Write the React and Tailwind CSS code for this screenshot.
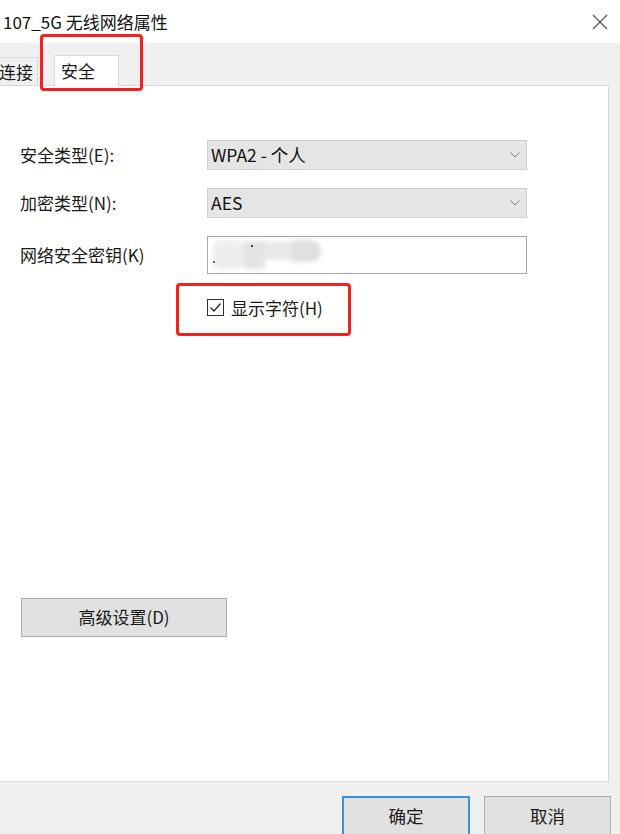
import React from "react";

const FONT = { fontFamily: '"Noto Sans CJK SC", "Noto Sans", sans-serif' };

function Chevron() {
  return (
    <svg width="12" height="8" viewBox="0 0 12 8" className="mr-[5px]">
      <path d="M1.5 1.5 L6 6 L10.5 1.5" fill="none" stroke="#7a7a7a" strokeWidth="1" />
    </svg>
  );
}

function Select({ value }) {
  return (
    <div className="w-[320px] h-[30px] bg-[#e5e5e5] border border-[#cfcfcf] flex items-center justify-between pl-[3px]">
      <span className="text-[17.5px] text-[#111]">{value}</span>
      <Chevron />
    </div>
  );
}

function Row({ label, children, className = "" }) {
  return (
    <div className={`flex items-center ${className}`}>
      <div className="w-[207px] pl-[20px] text-[17px] text-[#1a1a1a]">{label}</div>
      {children}
    </div>
  );
}

export default function App() {
  return (
    <div style={FONT} className="relative w-[620px] h-[834px] overflow-hidden bg-[#f0f0f0] text-[#1a1a1a]">
      {/* title bar */}
      <div className="h-[43px] bg-white flex items-center justify-between pl-[3px] pr-[12px]">
        <span className="text-[17px] text-[#111]">107_5G 无线网络属性</span>
        <svg width="16" height="16" viewBox="0 0 16 16">
          <path d="M1 1 L15 15 M15 1 L1 15" stroke="#555" strokeWidth="1.3" />
        </svg>
      </div>

      {/* tabs */}
      <div className="h-[42px] flex items-end">
        <div className="h-[28px] w-[40px] border-t border-r border-[#d9d9d9] bg-[#f0f0f0] flex items-center text-[17px] -ml-[2px] pl-[1px]">
          连接
        </div>
        <div className="h-[31px] w-[65px] ml-[16px] bg-white border-t border-l border-r border-[#d9d9d9] flex items-center pl-[6px] text-[17px] relative top-[1px]">
          安全
        </div>
      </div>

      {/* panel */}
      <div className="h-[697px] w-[609px] bg-white border border-l-0 border-[#d9d9d9] pt-[54px]">
        <Row label="安全类型(E):">
          <Select value="WPA2 - 个人" />
        </Row>
        <Row label="加密类型(N):" className="mt-[18px]">
          <Select value="AES" />
        </Row>
        <Row label="网络安全密钥(K)" className="mt-[18px]">
          <div className="w-[320px] h-[38px] bg-white border border-[#a9a9a9] relative overflow-hidden">
            <div className="absolute left-[5px] top-[3px] w-[108px] h-[30px] flex blur-[2px]">
              <div className="w-[30px] h-full bg-[#eeeeee] rounded-[8px]" />
              <div className="w-[22px] h-[28px] mt-[1px] bg-[#e4e4e4]" />
              <div className="w-[26px] h-[18px] mt-[2px] bg-[#e8e8e8]" />
              <div className="w-[30px] h-[22px] bg-[#e0e0e0] rounded-r-[10px]" />
            </div>
            <div className="absolute left-[43px] top-[8px] w-[2px] h-[2px] bg-[#444]" />
            <div className="absolute left-[5px] top-[24px] w-[2px] h-[2px] bg-[#666]" />
          </div>
        </Row>
        <div className="mt-[21px] pl-[207px] flex items-center gap-[7px]">
          <div className="w-[17px] h-[17px] border border-[#333] bg-white flex items-center justify-center">
            <svg width="13" height="13" viewBox="0 0 13 13">
              <path d="M1.5 6.5 L5 10 L11.5 2.5" fill="none" stroke="#222" strokeWidth="1.3" />
            </svg>
          </div>
          <span className="text-[17px]">显示字符(H)</span>
        </div>

        <div className="mt-[277px] ml-[21px] w-[206px] h-[39px] bg-[#e1e1e1] border border-[#adadad] flex items-center justify-center text-[17px]">
          高级设置(D)
        </div>
      </div>

      {/* footer buttons */}
      <div className="flex justify-end gap-[14px] pr-[9px] mt-[14px]">
        <div className="w-[128px] h-[40px] bg-[#e1e1e1] border-2 border-[#3d8fdc] flex items-center justify-center text-[17.5px]">
          确定
        </div>
        <div className="w-[127px] h-[40px] bg-[#e1e1e1] border border-[#adadad] flex items-center justify-center text-[17.5px]">
          取消
        </div>
      </div>

      {/* red annotation boxes */}
      <div className="absolute left-[40px] top-[34px] w-[103px] h-[57px] border-[3px] border-[#f41f1f] rounded-[4px]" />
      <div className="absolute left-[176px] top-[283px] w-[175px] h-[53px] border-[3px] border-[#f41f1f] rounded-[4px]" />
    </div>
  );
}
